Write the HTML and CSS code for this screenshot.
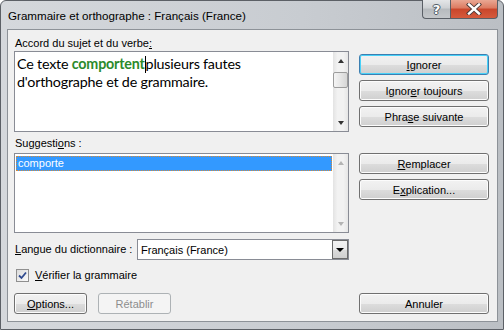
FILE: index.html
```html
<!DOCTYPE html>
<html lang="fr">
<head>
<meta charset="utf-8">
<title>Grammaire et orthographe</title>
<link rel="stylesheet" href="styles.css">
</head>
<body>
<div class="window">
  <div class="titlebar">
    <span class="title">Grammaire et orthographe : Français (France)</span>
    <div class="caption-buttons">
      <div class="cap-btn help"><span>?</span></div>
      <div class="cap-btn close"><svg width="16" height="12" viewBox="0 0 16 12"><path d="M3 1.5 L13 10.5 M13 1.5 L3 10.5" stroke="#4a3a38" stroke-width="4.2" stroke-linecap="square"/><path d="M3 1.5 L13 10.5 M13 1.5 L3 10.5" stroke="#fff" stroke-width="2.4" stroke-linecap="square"/></svg></div>
    </div>
  </div>
  <div class="client">
    <div class="left">
      <div class="label">Accord du sujet et du verbe<u>:</u></div>
      <div class="textbox">
        <div class="text">Ce texte <b class="err">comportent</b><span class="caret"></span>plusieurs fautes<br>d'orthographe et de grammaire.</div>
        <div class="vscroll">
          <div class="arrow up"></div>
          <div class="thumb"></div>
          <div class="track"></div>
          <div class="arrow down"></div>
        </div>
      </div>
      <div class="label label-sugg">Suggesti<u>o</u>ns :</div>
      <div class="listbox">
        <div class="items"><div class="item selected">comporte</div></div>
        <div class="vscroll disabled">
          <div class="arrow up"></div>
          <div class="track"></div>
          <div class="arrow down"></div>
        </div>
      </div>
      <div class="lang-row">
        <span class="label"><u>L</u>angue du dictionnaire :</span>
        <div class="combo">
          <span class="combo-text">Français (France)</span>
          <div class="combo-btn"><div class="tri"></div></div>
        </div>
      </div>
      <div class="check-row">
        <div class="checkbox"><svg width="9" height="9" viewBox="0 0 9 9"><path d="M1 4.5 L3.5 7 L8 1.5" fill="none" stroke="#2f4a8f" stroke-width="1.8"/></svg></div>
        <span class="label"><u>V</u>érifier la grammaire</span>
      </div>
      <div class="bottom-row">
        <div class="btn small"><u>O</u>ptions...</div>
        <div class="btn small disabled">Rétablir</div>
      </div>
    </div>
    <div class="right">
      <div class="btn default"><u>I</u>gnorer</div>
      <div class="btn">Ignor<u>e</u>r toujours</div>
      <div class="btn">Phra<u>s</u>e suivante</div>
      <div class="btn sep"><u>R</u>emplacer</div>
      <div class="btn">E<u>x</u>plication...</div>
      <div class="btn last">Annuler</div>
    </div>
  </div>
</div>
</body>
</html>
```
FILE: styles.css
```css
html, body {
  margin: 0;
  padding: 0;
  background: #ffffff;
}
body {
  font-family: "Liberation Sans", Arial, sans-serif;
  font-size: 11px;
  color: #000;
}
.window {
  width: 504px;
  height: 330px;
  box-sizing: border-box;
  border: 1px solid #5c6066;
  border-radius: 6px 6px 0 0;
  background: linear-gradient(90deg, #d5d8dc 0%, #c8ccd1 60%, #bbbfc4 100%);
  display: flex;
  flex-direction: column;
  padding: 0 5px 7px 6px;
}
.titlebar {
  height: 28px;
  display: flex;
  justify-content: space-between;
  align-items: flex-start;
}
.title {
  font-size: 11.6px;
  color: #000;
  margin-top: 8px;
  margin-left: 1px;
}
.caption-buttons {
  display: flex;
  margin-top: -1px;
}
.cap-btn {
  height: 19px;
  box-sizing: border-box;
  border: 1px solid #5a5f66;
  border-top: none;
  display: flex;
  align-items: center;
  justify-content: center;
}
.cap-btn.help {
  width: 28px;
  border-right: none;
  border-radius: 0 0 0 4px;
  background: linear-gradient(#e4e6e8 0%, #cdd0d3 45%, #b6babe 50%, #c4c7ca 100%);
}
.cap-btn.help span {
  font-family: "DejaVu Sans", sans-serif;
  font-weight: bold;
  font-size: 13px;
  color: #fff;
  text-shadow: 0 0 1px #3e4650, 1px 0 0 #55606a, -1px 0 0 #55606a, 0 1px 0 #55606a, 0 -1px 0 #55606a;
}
.cap-btn.close {
  width: 48px;
  border-radius: 0 0 4px 0;
  background: linear-gradient(#e9a793 0%, #dc7a60 45%, #c9462b 50%, #d55a3c 100%);
}
.client {
  flex: 1;
  border: 1px solid #8d9298;
  background: #f0f0f0;
  display: flex;
  padding: 6px 8px 7px 6px;
  gap: 10px;
}
.left {
  width: 335px;
  display: flex;
  flex-direction: column;
}
.right {
  width: 130px;
  display: flex;
  flex-direction: column;
  padding-top: 18px;
  gap: 5px;
}
.label {
  line-height: 15px;
  height: 15px;
  color: #000;
  margin-left: 1px;
}
.textbox {
  height: 81px;
  box-sizing: border-box;
  border: 1px solid #898c95;
  background: #fff;
  display: flex;
}
.text {
  flex: 1;
  font-family: Lato, "Liberation Sans", sans-serif;
  font-size: 14.3px;
  letter-spacing: -0.2px;
  line-height: 18px;
  padding: 3px 2px 0 2px;
  color: #000;
}
.text .err {
  color: #2b8a2b;
  font-weight: bold;
}
.caret {
  display: inline-block;
  width: 1px;
  height: 17px;
  background: #000;
  vertical-align: -4px;
}
.vscroll {
  width: 15px;
  display: flex;
  flex-direction: column;
  align-items: stretch;
  background: linear-gradient(90deg, #e3e3e3, #f2f2f2 30%, #f2f2f2 70%, #e6e6e6);
}
.vscroll .track { flex: 1; }
.arrow {
  height: 17px;
  display: flex;
  align-items: center;
  justify-content: center;
}
.arrow::before {
  content: "";
  border-left: 3.5px solid transparent;
  border-right: 3.5px solid transparent;
}
.arrow.up::before { border-bottom: 4px solid #333; }
.arrow.down::before { border-top: 4px solid #333; }
.vscroll.disabled .arrow.up::before { border-bottom-color: #b4b4b4; }
.vscroll.disabled .arrow.down::before { border-top-color: #b4b4b4; }
.thumb {
  height: 16px;
  margin-top: 3px;
  box-sizing: border-box;
  border: 1px solid #9c9c9c;
  border-radius: 2px;
  background: linear-gradient(90deg, #f4f4f4, #e6e6e6 50%, #d6d6d6);
}
.label-sugg {
  margin-top: 4px;
}
.listbox {
  margin-top: 2px;
  height: 80px;
  box-sizing: border-box;
  border: 1px solid #898c95;
  background: #fff;
  display: flex;
}
.items {
  flex: 1;
  padding: 2px 1px 0 1px;
}
.item {
  height: 15px;
  line-height: 14px;
  padding-left: 2px;
}
.item.selected {
  background: #3399ff;
  color: #fff;
  outline: 1px dotted #d48a3a;
  outline-offset: -1px;
}
.lang-row {
  margin-top: 6px;
  display: flex;
  align-items: center;
  justify-content: space-between;
}
.combo {
  width: 212px;
  height: 21px;
  box-sizing: border-box;
  border: 1px solid #898c95;
  background: #fff;
  display: flex;
  align-items: center;
}
.combo-text {
  flex: 1;
  padding-left: 3px;
}
.combo-btn {
  width: 16px;
  height: 19px;
  box-sizing: border-box;
  border: 1px solid #6a6a6a;
  background: linear-gradient(#f2f2f2 0%, #ebebeb 50%, #dcdcdc 51%, #cfcfcf 100%);
  display: flex;
  align-items: center;
  justify-content: center;
}
.tri {
  border-left: 4px solid transparent;
  border-right: 4px solid transparent;
  border-top: 4px solid #000;
}
.check-row {
  margin-top: 8px;
  display: flex;
  align-items: center;
  gap: 5px;
  padding-left: 2px;
}
.checkbox {
  width: 13px;
  height: 13px;
  box-sizing: border-box;
  border: 1px solid #8f8f8f;
  background: linear-gradient(135deg, #dcdcdc, #fbfbfb);
  display: flex;
  align-items: center;
  justify-content: center;
}
.bottom-row {
  margin-top: auto;
  display: flex;
  gap: 11px;
}
.btn {
  height: 21px;
  box-sizing: border-box;
  border: 1px solid #707070;
  border-radius: 3px;
  background: linear-gradient(#f2f2f2 0%, #ebebeb 50%, #dddddd 51%, #cfcfcf 100%);
  box-shadow: inset 0 0 0 1px #fcfcfc;
  display: flex;
  align-items: center;
  justify-content: center;
  color: #000;
}
.btn.small { width: 73px; }
.btn.disabled {
  border-color: #adb2b5;
  background: #f4f4f4;
  box-shadow: none;
  color: #8d8d8d;
}
.btn.default {
  border-color: #3c7fb1;
  box-shadow: inset 0 0 0 1px #48d1f8;
}
.btn.sep { margin-top: 21px; }
.btn.last { margin-top: auto; }
```
